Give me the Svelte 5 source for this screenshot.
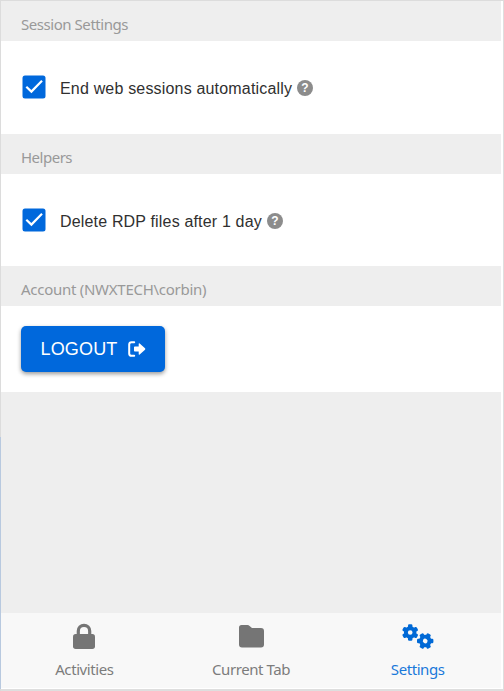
<script>
  const options = [
    { title: 'Session Settings', label: 'End web sessions automatically', kind: 'session' },
    { title: 'Helpers', label: 'Delete RDP files after 1 day', kind: 'helpers' }
  ];
  const teeth = [0, 60, 120, 180, 240, 300];
</script>

{#snippet gear(x, y, turn)}
  <g transform="translate({x} {y}) rotate({turn})">
    <circle r="4.3" fill="none" stroke="currentColor" stroke-width="3.9" />
    {#each teeth as angle}
      <rect x="-2.2" y="-8.2" width="4.4" height="4" rx="1.2" fill="currentColor" transform="rotate({angle})" />
    {/each}
  </g>
{/snippet}

<main>
  <div class="panel">
    {#each options as option}
      <h2 class={option.kind}>{option.title}</h2>
      <section class="row {option.kind}">
        <svg class="check" width="24" height="24" viewBox="0 0 24 24">
          <rect x=".5" y=".5" width="23" height="23" rx="2.5" fill="#0068dc" />
          <path d="M4.3 11.7 9.4 16.6 20 5.8" fill="none" stroke="#fff" stroke-width="2.2" />
        </svg>
        <span class="label {option.kind}">{option.label}</span>
        <span class="help">?</span>
      </section>
    {/each}
    <h2 class="account">Account (NWXTECH\corbin)</h2>
    <section class="logout">
      <button>
        <span>LOGOUT</span>
        <svg width="18" height="16" viewBox="0 0 18 16">
          <path d="M6.2 1.2H3.6Q1.2 1.2 1.2 3.6V12.4Q1.2 14.8 3.6 14.8H6.2" fill="none" stroke="#fff" stroke-width="2" stroke-linecap="round" />
          <path d="M6 6.2Q6 5.5 6.8 5.5H10.7V3Q10.7 1.8 11.7 2.6L17 7.3Q17.7 8 17 8.7L11.7 13.4Q10.7 14.2 10.7 13V10.5H6.8Q6 10.5 6 9.8Z" fill="#fff" />
        </svg>
      </button>
    </section>
    <div class="empty"></div>
    <nav>
      <a>
        <svg width="34" height="28" viewBox="0 0 34 28">
          <path d="M11.3 12V8A5.7 5.7 0 0 1 22.7 8V12" fill="none" stroke="currentColor" stroke-width="3.2" />
          <rect x="6" y="11" width="22" height="15" rx="2.7" fill="currentColor" />
        </svg>
        <span class="activities">Activities</span>
      </a>
      <a>
        <svg width="34" height="28" viewBox="0 0 34 28">
          <path d="M7.5 2H13.5Q14.7 2 15.6 2.9L18 5H27Q30 5 30 8V21.5Q30 24.5 27 24.5H8Q5 24.5 5 21.5V4.5Q5 2 7.5 2Z" fill="currentColor" />
        </svg>
        <span class="current">Current Tab</span>
      </a>
      <a class="active">
        <svg width="34" height="28" viewBox="0 0 34 28">
          {@render gear(9.2, 9.5, 0)}
          {@render gear(24.2, 18, 30)}
        </svg>
        <span class="settings">Settings</span>
      </a>
    </nav>
  </div>
</main>

<style>
  main {
    box-sizing: border-box;
    width: 504px;
    height: 691px;
    padding: 1px 0 0 1px;
    background: linear-gradient(#dcdcdc 0 437px, #b8c9df 437px 689px, #dadada 689px);
  }
  .panel {
    box-sizing: border-box;
    width: 503px;
    height: 690px;
    display: flex;
    flex-direction: column;
    background: #fff;
    border-right: 1px solid #dedede;
    border-bottom: 2px solid #dedede;
    padding: 0 2px 1px 0;
  }
  h2 {
    box-sizing: border-box;
    height: 40px;
    margin: 0;
    padding: 3px 20px 0;
    background: #eee;
    color: #999;
    font: 400 15px/40px "Noto Sans", sans-serif;
    white-space: nowrap;
  }
  h2.session { letter-spacing: -.45px; }
  h2.helpers { letter-spacing: -.5px; }
  h2.account { letter-spacing: -.27px; }
  .row {
    box-sizing: border-box;
    height: 93px;
    display: flex;
    align-items: center;
    padding: 0 0 2px 21px;
    background: #fff;
  }
  .row.helpers { height: 92px; padding-bottom: 0; }
  .label {
    flex: none;
    margin-left: 14px;
    padding-top: 4px;
    color: #303030;
    font: 16px/20px "Liberation Sans", Arial, sans-serif;
    white-space: nowrap;
  }
  .label.session { width: 232px; letter-spacing: .18px; }
  .label.helpers { width: 202px; letter-spacing: .17px; }
  .help {
    width: 16px;
    height: 16px;
    margin: 2px 0 0 5px;
    border-radius: 50%;
    background: #8c8c8c;
    color: #fff;
    font: bold 12px/16px "Liberation Sans", Arial, sans-serif;
    text-align: center;
  }
  .logout {
    box-sizing: border-box;
    height: 86px;
    padding: 20px;
    background: #fff;
  }
  button {
    box-sizing: border-box;
    width: 144px;
    height: 46px;
    display: flex;
    align-items: center;
    gap: 10px;
    border: 0;
    border-radius: 5px;
    padding: 0 0 0 19px;
    background: #0068dc;
    color: #fff;
    box-shadow: 0 2px 4px #0006;
    font: 18px/24px "Liberation Sans", Arial, sans-serif;
    letter-spacing: .15px;
  }
  button span { width: 78px; }
  .empty { flex: 1; background: #eee; }
  nav {
    height: 75px;
    display: flex;
    background: #f8f8f8;
  }
  nav a {
    flex: 1;
    display: flex;
    flex-direction: column;
    align-items: center;
    padding-top: 10px;
    color: #7c7c7c;
    font: 400 15px/20px "Noto Sans", sans-serif;
    letter-spacing: -.42px;
    white-space: nowrap;
  }
  nav a svg { color: #757575; }
  nav a span { margin-top: 8px; }
  nav .active, nav .active svg { color: #0069d6; }
  nav .active span { color: #1a79da; }
</style>
